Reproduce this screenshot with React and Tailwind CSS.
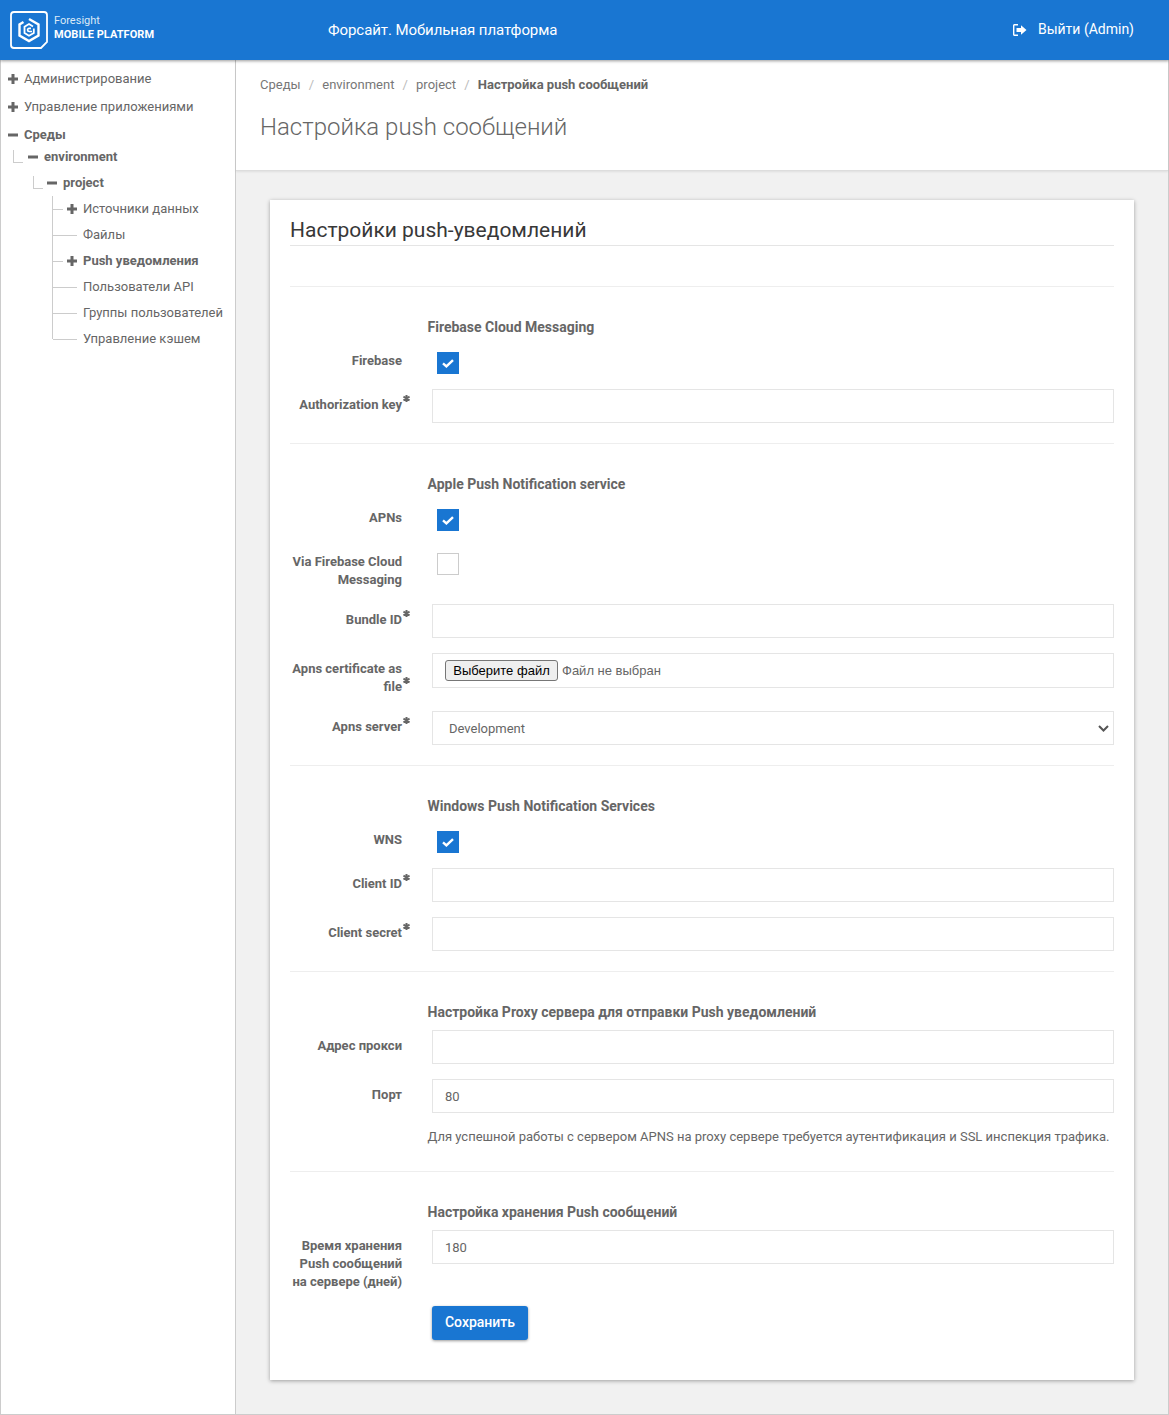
import React from "react";

const Plus = () => (
  <svg width="10" height="10" viewBox="0 0 10 10" className="shrink-0" fill="#666">
    <path d="M3.5 0h3v3.5H10v3H6.5V10h-3V6.5H0v-3h3.5z" />
  </svg>
);
const Minus = () => (
  <svg width="10" height="10" viewBox="0 0 10 10" className="shrink-0" fill="#666">
    <rect x="0" y="3.5" width="10" height="3" />
  </svg>
);
const Logo = () => (
  <svg width="38" height="38" viewBox="0 0 38 38" fill="none" stroke="#fff" className="shrink-0">
    <path d="M4 1H34C35.7 1 37 2.3 37 4V31L31 37H4C2.3 37 1 35.7 1 34V4C1 2.3 2.3 1 4 1Z" strokeWidth="1.8" />
    <path d="M13.5 11L9.5 13.5V24.5L19 30L28.5 24.5V13.5L19 8" strokeWidth="2.4" />
    <path d="M23 15.5L19 13L14.5 15.7V22L19 24.8L23.8 22V17.5" strokeWidth="1.8" />
    <path d="M22 20.5H19.2A1.6 1.6 0 0 1 19.2 17.3H21" strokeWidth="1.7" />
  </svg>
);
const LogOut = () => (
  <svg width="14" height="12" viewBox="0 0 14 12" fill="#fff" className="shrink-0">
    <path d="M5 0H1.5C.7 0 0 .7 0 1.5v9C0 11.3.7 12 1.5 12H5v-1.4H1.6a.2.2 0 0 1-.2-.2V1.6c0-.1.1-.2.2-.2H5z" />
    <path d="M8 1.2L13.5 6 8 10.8V8H3.5V4H8z" />
  </svg>
);
const Asterisk = () => (
  <svg width="7" height="7" viewBox="0 0 7 7" stroke="#666" strokeWidth="2" className="absolute -top-[4px] left-px">
    <path d="M3.5 0V7M.4 1.7L6.6 5.3M.4 5.3L6.6 1.7" />
  </svg>
);

const Check = ({ on }) =>
  on ? (
    <span className="flex h-[22px] w-[22px] items-center justify-center bg-[#1976d2]">
      <svg width="12" height="9" viewBox="0 0 12 9" fill="none" stroke="#fff" strokeWidth="2.4">
        <path d="M1 4.4L4.4 7.4L11 1.2" />
      </svg>
    </span>
  ) : (
    <span className="block h-[22px] w-[22px] border border-[#ccc] bg-white" />
  );

const Label = ({ children, req }) => (
  <div className="w-[112px] shrink-0 text-right text-[13px] font-bold leading-[18px] text-[#666]">
    {children}
    {req && (
      <span className="relative inline-block h-[10px] w-0">
        <Asterisk />
      </span>
    )}
  </div>
);

const Input = ({ value }) => (
  <div className="ml-[30px] flex h-[34px] flex-1 items-center border border-[#e5e5e5] bg-white px-[12px] pt-px text-[13px] text-[#666]">
    {value}
  </div>
);

const Field = ({ label, req, value, mt }) => (
  <div className={`flex ${mt}`}>
    <div className="pt-[7px]">
      <Label req={req}>{label}</Label>
    </div>
    <Input value={value} />
  </div>
);

const CheckRow = ({ label, on, mt }) => (
  <div className={`flex ${mt}`}>
    <Label>{label}</Label>
    <div className="ml-[35px]">
      <Check on={on} />
    </div>
  </div>
);

const Heading = ({ children }) => (
  <div className="ml-[137.5px] text-[14px] font-bold leading-[20px] text-[#666]">{children}</div>
);
const Hr = ({ mt }) => <div className={`h-px bg-[#eee] ${mt}`} />;

const Leaf = ({ children, icon, bold }) => (
  <li className="flex h-[26px] items-center">
    <span className={`h-px shrink-0 bg-[#ccc] ${icon ? "w-[10px]" : "w-[24px]"}`} />
    {icon ? (
      <span className="ml-[4px] mr-[6px]">
        <Plus />
      </span>
    ) : (
      <span className="w-[6px]" />
    )}
    <span className={`whitespace-nowrap text-[13px] text-[#666] ${bold ? "font-bold" : ""}`}>{children}</span>
  </li>
);

const Corner = () => <span className="mt-px h-[13px] w-[10px] shrink-0 self-start border-b border-l border-[#ccc]" />;

function Sidebar() {
  return (
    <aside className="w-[236px] shrink-0 border-x border-[#ccc] bg-white pl-[7px] pt-[5px] text-[13px] text-[#666]">
      <div className="flex h-[28px] items-center gap-[6px]">
        <Plus />
        <span>Администрирование</span>
      </div>
      <div className="flex h-[28px] items-center gap-[6px]">
        <Plus />
        <span>Управление приложениями</span>
      </div>
      <div className="flex h-[28px] items-center gap-[6px] font-bold">
        <Minus />
        <span>Среды</span>
      </div>
      <div className="ml-[5px] flex h-[16px] items-center">
        <Corner />
        <span className="ml-[5px]">
          <Minus />
        </span>
        <span className="ml-[6px] font-bold">environment</span>
      </div>
      <div className="ml-[25px] mt-[10px] flex h-[16px] items-center">
        <Corner />
        <span className="ml-[4px]">
          <Minus />
        </span>
        <span className="ml-[6px] font-bold">project</span>
      </div>
      <ul className="ml-[44px] mt-[5px] h-[143px] border-l border-[#ccc]">
        <Leaf icon>Источники данных</Leaf>
        <Leaf>Файлы</Leaf>
        <Leaf icon bold>
          Push уведомления
        </Leaf>
        <Leaf>Пользователи API</Leaf>
        <Leaf>Группы пользователей</Leaf>
        <Leaf>Управление кэшем</Leaf>
      </ul>
    </aside>
  );
}

export default function App() {
  return (
    <div className="flex h-[1415px] flex-col overflow-hidden bg-[#f1f1f1] font-['Roboto',sans-serif]">
      <header className="z-10 flex h-[60px] shrink-0 items-center bg-[#1976d2] pl-[10px] text-white shadow-[0_1px_3px_rgba(0,0,0,0.4)]">
        <Logo />
        <div className="mb-[4px] ml-[6px] w-[274px] text-[11px] leading-[14px]">
          <div className="font-normal text-[#dbe9f7]">Foresight</div>
          <div className="font-bold tracking-[0.05px]">MOBILE PLATFORM</div>
        </div>
        <div className="text-[15px] tracking-[-0.07px]">Форсайт. Мобильная платформа</div>
        <div className="mb-px ml-auto mr-[35px] flex items-center gap-[11px] text-[14px]">
          <LogOut />
          <span>Выйти (Admin)</span>
        </div>
      </header>
      <div className="flex min-h-0 flex-1 border-b border-[#ccc]">
        <Sidebar />
        <main className="min-w-0 flex-1 border-r border-[#ccc]">
          <div className="h-[111px] border-b border-[#ddd] bg-white pl-[24px] pt-[16px] shadow-[0_1px_2px_rgba(0,0,0,0.08)]">
            <div className="flex text-[13px] leading-[18px] text-[#777]">
              <span>Среды</span>
              <span className="mx-[8.15px] text-[#bbb]">/</span>
              <span>environment</span>
              <span className="mx-[8.15px] text-[#bbb]">/</span>
              <span>project</span>
              <span className="mx-[8.15px] text-[#bbb]">/</span>
              <span className="font-bold text-[#666]">Настройка push сообщений</span>
            </div>
            <h1 className="mt-[18px] text-[24px] font-light leading-[30px] text-[#666]">Настройка push сообщений</h1>
          </div>
          <div className="mx-[34px] mt-[29px] h-[1180px] bg-white px-[20px] pt-[16px] shadow-[0_1px_4px_rgba(0,0,0,0.35)]">
            <h2 className="border-b border-[#e5e5e5] text-[21px] font-normal leading-[29px] text-[#383838]">
              Настройки push-уведомлений
            </h2>
            <Hr mt="mt-[40px]" />

            <div className="mt-[30px]"><Heading>Firebase Cloud Messaging</Heading></div>
            <CheckRow mt="mt-[15px]" label="Firebase" on />
            <Field mt="mt-[15px]" label="Authorization key" req />
            <Hr mt="mt-[20px]" />

            <div className="mt-[30px]"><Heading>Apple Push Notification service</Heading></div>
            <CheckRow mt="mt-[15px]" label="APNs" on />
            <CheckRow mt="mt-[22px]" label="Via Firebase Cloud Messaging" />
            <Field mt="mt-[15px]" label="Bundle ID" req />
            <div className="mt-[15px] flex">
              <div className="pt-[7px]"><Label req>Apns certificate as file</Label></div>
              <div className="ml-[30px] flex h-[35px] flex-1 items-center border border-[#e5e5e5] bg-white pl-[12px] text-[#666]">
                <button className="h-[21px] w-[113px] rounded-[3px] border border-[#767676] bg-[#efefef] font-['Liberation_Sans',sans-serif] text-[13px] leading-[19px] text-black">
                  Выберите файл
                </button>
                <span className="ml-[4px] font-['Liberation_Sans',sans-serif] text-[13px]">Файл не выбран</span>
              </div>
            </div>
            <div className="mt-[15px] flex">
              <div className="pt-[7px]"><Label req>Apns server</Label></div>
              <div className="ml-[30px] flex h-[34px] flex-1 items-center justify-between border border-[#e5e5e5] bg-white pl-[16px] pr-[4px] pt-px text-[13px] text-[#666]">
                <span>Development</span>
                <svg width="11" height="7" viewBox="0 0 11 7" fill="none" stroke="#555" strokeWidth="2">
                  <path d="M1 1L5.5 5.5L10 1" />
                </svg>
              </div>
            </div>
            <Hr mt="mt-[20px]" />

            <div className="mt-[30px]"><Heading>Windows Push Notification Services</Heading></div>
            <CheckRow mt="mt-[15px]" label="WNS" on />
            <Field mt="mt-[15px]" label="Client ID" req />
            <Field mt="mt-[15px]" label="Client secret" req />
            <Hr mt="mt-[20px]" />

            <div className="mt-[30px]"><Heading>Настройка Proxy сервера для отправки Push уведомлений</Heading></div>
            <Field mt="mt-[8px]" label="Адрес прокси" />
            <Field mt="mt-[15px]" label="Порт" value="80" />
            <div className="ml-[137.5px] mt-[15px] text-[13px] leading-[18px] text-[#666]">
              Для успешной работы с сервером APNS на proxy сервере требуется аутентификация и SSL инспекция трафика.
            </div>
            <Hr mt="mt-[25px]" />

            <div className="mt-[30px]"><Heading>Настройка хранения Push сообщений</Heading></div>
            <Field mt="mt-[8px]" label="Время хранения Push сообщений на сервере (дней)" value="180" />
            <button className="ml-[142px] mt-[15px] block h-[34px] w-[96px] rounded-[3px] bg-[#1976d2] pb-px text-[14px] font-medium text-white shadow-[0_1px_3px_rgba(0,0,0,0.4)]">
              Сохранить
            </button>
          </div>
        </main>
      </div>
    </div>
  );
}
